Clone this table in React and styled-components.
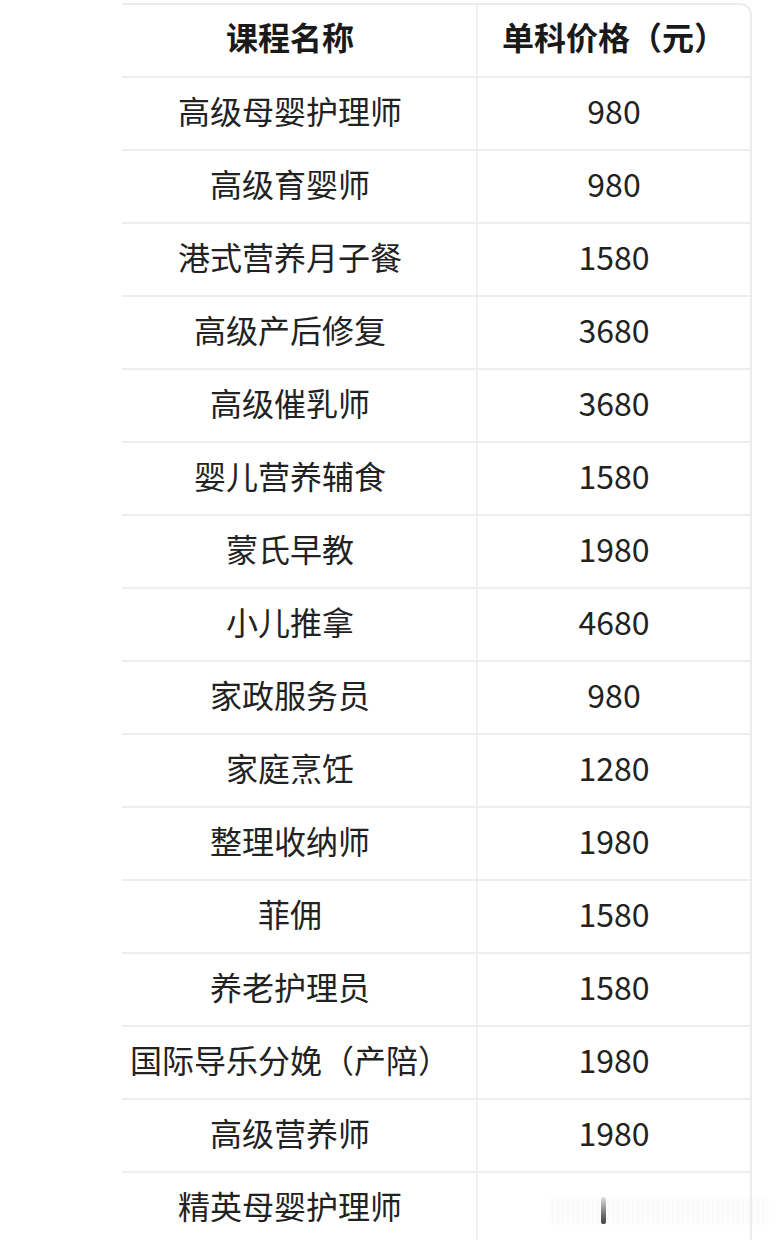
import React from "react";
import styled, { createGlobalStyle } from "styled-components";

const Global = createGlobalStyle`
  html, body { margin: 0; padding: 0; background: #ffffff; }
  body { font-family: "Noto Sans CJK SC", "Noto Sans", sans-serif; color: #1f1f1f; overflow: hidden; }
`;

const Page = styled.div`
  position: relative;
  height: 1240px;
  overflow: hidden;
  padding: 3px 32px 0 122px;
  box-sizing: border-box;
`;

const Table = styled.div`
  display: grid;
  grid-template-columns: 356px 1fr;
  grid-auto-rows: 73px;
  width: 630px;
  border-top: 2px solid #ececec;
  border-right: 2px solid #ececec;
  border-top-right-radius: 12px;
  box-sizing: border-box;
`;

const Cell = styled.div`
  display: flex;
  align-items: center;
  justify-content: center;
  box-sizing: border-box;
  border-bottom: 2px solid #eeeeee;
  border-right: ${(p) => (p.$first ? "2px solid #f0f0f0" : "none")};
  padding-right: ${(p) => (p.$first ? "18px" : "0")};
  padding-bottom: ${(p) => (p.$head ? "10px" : "8px")};
  font-size: 32px;
  line-height: 1;
  font-weight: ${(p) => (p.$head ? 700 : 400)};
  color: ${(p) => (p.$head ? "#1a1a1a" : "#222222")};
  white-space: nowrap;
`;

const Watermark = styled.div`
  position: absolute;
  left: 552px;
  top: 1197px;
  width: 216px;
  height: 27px;
  background: repeating-linear-gradient(
    90deg,
    rgba(210, 210, 210, 0.3) 0 2px,
    rgba(255, 255, 255, 0) 2px 5px
  );
  filter: blur(1px);
  opacity: 0.6;
`;

const WatermarkBar = styled.div`
  position: absolute;
  left: 601px;
  top: 1197px;
  width: 5px;
  height: 27px;
  border-radius: 2px;
  background: linear-gradient(180deg, #e0e0e0, #666 70%, #444);
  filter: blur(0.7px);
`;

const rows = [
  ["高级母婴护理师", "980"],
  ["高级育婴师", "980"],
  ["港式营养月子餐", "1580"],
  ["高级产后修复", "3680"],
  ["高级催乳师", "3680"],
  ["婴儿营养辅食", "1580"],
  ["蒙氏早教", "1980"],
  ["小儿推拿", "4680"],
  ["家政服务员", "980"],
  ["家庭烹饪", "1280"],
  ["整理收纳师", "1980"],
  ["菲佣", "1580"],
  ["养老护理员", "1580"],
  ["国际导乐分娩（产陪）", "1980"],
  ["高级营养师", "1980"],
  ["精英母婴护理师", ""],
];

export default function App() {
  return (
    <>
      <Global />
      <Page>
        <Table>
          <Cell $first $head>课程名称</Cell>
          <Cell $head>单科价格（元）</Cell>
          {rows.map(([name, price]) => (
            <React.Fragment key={name}>
              <Cell $first>{name}</Cell>
              <Cell>{price}</Cell>
            </React.Fragment>
          ))}
        </Table>
        <Watermark />
        <WatermarkBar />
      </Page>
    </>
  );
}
